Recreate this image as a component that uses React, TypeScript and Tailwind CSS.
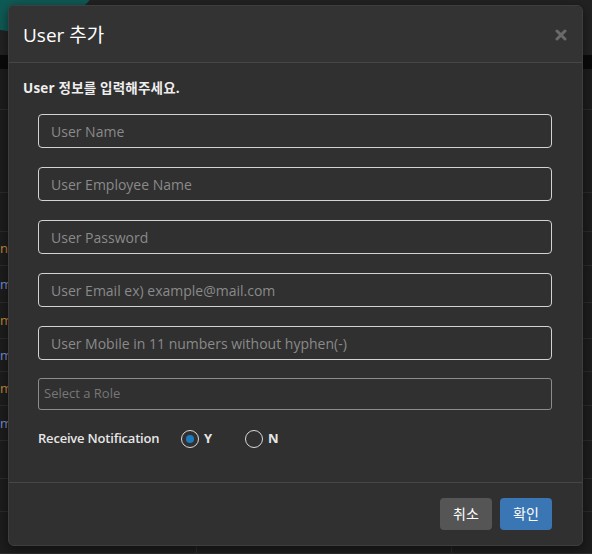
import React from 'react';

const FIELDS = [
  'User Name',
  'User Employee Name',
  'User Password',
  'User Email ex) example@mail.com',
  'User Mobile in 11 numbers without hyphen(-)',
];

const ROWS = [
  { h: 41, m: '' },
  { h: 83, m: '' },
  { h: 39, m: '' },
  { h: 34, m: 'n' },
  { h: 37, m: 'm' },
  { h: 36, m: 'm' },
  { h: 33, m: 'm' },
  { h: 34, m: 'm' },
  { h: 35, m: 'm' },
  { h: 38, m: '' },
  { h: 33, m: '' },
  { h: 42, m: '' },
];

export default function App() {
  return (
    <div
      className="relative w-[592px] h-[554px] overflow-hidden bg-[#1d1d1d]"
      style={{ fontFamily: '"Open Sans", "Noto Sans CJK KR", sans-serif' }}
    >
      {/* page behind the dialog */}
      <div className="absolute w-[184px] h-[184px] rounded-full bg-[#0f5a55] left-[-72px] top-[-152px]" />
      <div className="flex flex-col">
        <div className="h-[55px] bg-[#222222]" />
        <div className="h-[14px] bg-[#0a0a0a]" />
        {ROWS.map((r, i) => (
          <div
            key={i}
            className="border-b border-[#2c2c2c] flex items-center text-[13px] leading-none"
            style={{ height: r.h }}
          >
            <span className={i % 2 ? 'text-[#c88a3a]' : 'text-[#7a8fd0]'}>{r.m}</span>
          </div>
        ))}
      </div>
      <div className="absolute left-[196px] bottom-0 h-[8px] w-px bg-[#2c2c2c]" />
      <div className="absolute left-[451px] bottom-0 h-[8px] w-px bg-[#2c2c2c]" />

      {/* dialog */}
      <div className="absolute left-[8px] top-[5px] w-[575px] h-[541px] rounded-[6px] border border-[#3e3e3e] bg-[#303030] flex flex-col shadow-[0_3px_12px_rgba(0,0,0,0.5)]">
        <div className="h-[57px] shrink-0 flex items-center justify-between pl-[14px] pr-[15px] border-b border-[#464646] bg-[#333333] rounded-t-[6px]">
          <h4 className="text-[19px] text-white font-normal pt-[2px]">User 추가</h4>
          <svg width="12" height="12" viewBox="0 0 12 12" className="mt-[1px]">
            <path d="M2 2 L10 10 M10 2 L2 10" stroke="#6a6a6a" strokeWidth="3" strokeLinecap="round" />
          </svg>
        </div>

        <div className="flex-1 px-[14px] pt-[16px]">
          <p className="text-[13.5px] font-bold text-[#eeeeee] leading-[18px] tracking-[0.2px]">User 정보를 입력해주세요.</p>
          <div className="pl-[15px] pr-[16px] mt-[17px] flex flex-col gap-[19px]">
            {FIELDS.map((f) => (
              <div
                key={f}
                className="h-[34px] rounded-[4px] border border-[#d2d2d2] flex items-center px-[12px] text-[14px] text-[#8a8a8a]"
              >
                {f}
              </div>
            ))}
            <div className="h-[32px] rounded-[3px] border border-[#8c8c8c] flex items-center px-[5px] text-[13px] text-[#777777] -mt-[1px]">
              Select a Role
            </div>
          </div>
          <div className="pl-[15px] mt-[19px] flex items-center text-[13px] font-semibold text-[#e6e6e6]">
            <span className="w-[143px] tracking-[-0.2px]">Receive Notification</span>
            <span className="w-[18px] h-[18px] rounded-full border border-[#d8d8d8] flex items-center justify-center">
              <span className="w-[8px] h-[8px] rounded-full bg-[#1c7bbf]" />
            </span>
            <span className="ml-[5px] w-[41px] font-bold">Y</span>
            <span className="w-[18px] h-[18px] rounded-full border border-[#d8d8d8]" />
            <span className="ml-[5px] font-bold">N</span>
          </div>
        </div>

        <div className="h-[63px] shrink-0 border-t border-[#464646] flex items-center justify-end gap-[8px] pr-[30px] pb-[1px]">
          <button className="w-[52px] h-[32px] rounded-[4px] bg-[#555555] text-white text-[14px]">취소</button>
          <button className="w-[52px] h-[32px] rounded-[4px] bg-[#3a76b4] text-white text-[14px]">확인</button>
        </div>
      </div>
    </div>
  );
}
